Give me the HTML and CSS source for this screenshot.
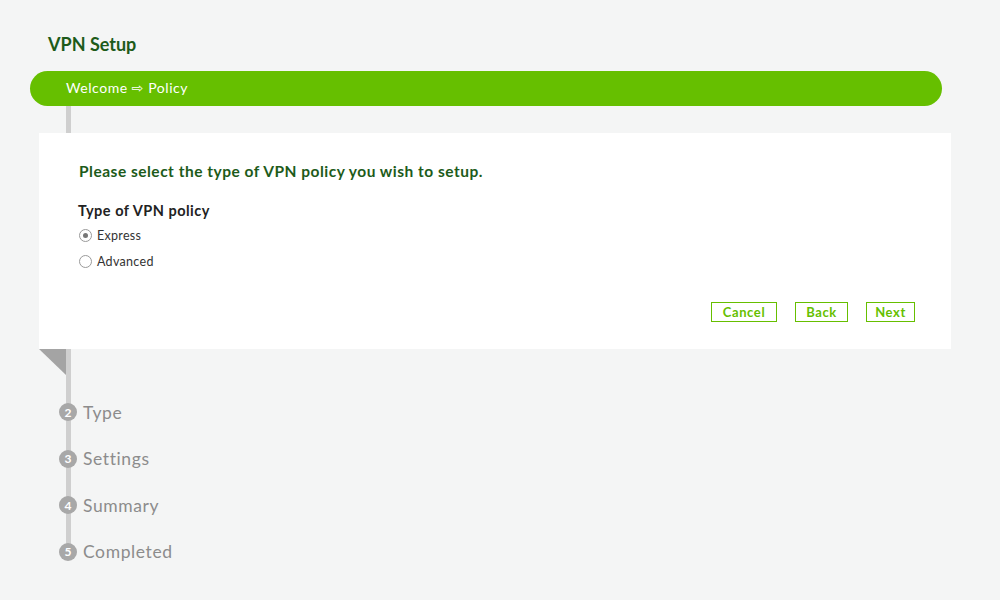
FILE: index.html
```html
<!DOCTYPE html>
<html>
<head>
<meta charset="utf-8">
<link rel="stylesheet" href="styles.css">
</head>
<body>
<div class="page">
  <h1 class="title">VPN Setup</h1>
  <div class="wizard">
    <div class="pill">Welcome &#8680; Policy</div>
    <div class="rail-top"></div>
    <div class="card">
      <p class="lead">Please select the type of VPN policy you wish to setup.</p>
      <div class="field-label">Type of VPN policy</div>
      <label class="radio-row"><span class="radio checked"></span>Express</label>
      <label class="radio-row"><span class="radio"></span>Advanced</label>
      <div class="actions">
        <button class="btn btn-cancel">Cancel</button>
        <button class="btn btn-back">Back</button>
        <button class="btn btn-next">Next</button>
      </div>
    </div>
    <div class="steps">
      <div class="fold"></div>
      <div class="step"><span class="num">2</span>Type</div>
      <div class="step"><span class="num">3</span>Settings</div>
      <div class="step"><span class="num">4</span>Summary</div>
      <div class="step"><span class="num">5</span>Completed</div>
    </div>
  </div>
</div>
</body>
</html>
```
FILE: styles.css
```css
html, body {
  margin: 0;
  padding: 0;
  background: #f4f5f5;
  font-family: "Lato", "Open Sans", "DejaVu Sans", sans-serif;
}
.page {
  width: 1000px;
  height: 600px;
  overflow: hidden;
}
.title {
  margin: 0;
  padding: 33px 0 0 48px;
  height: 38px;
  font-size: 18px;
  font-weight: 700;
  color: #1d5b1a;
  line-height: 22px;
}
.wizard {
  padding-left: 30px;
}
.pill {
  width: 876px;
  height: 35px;
  line-height: 34px;
  background: #66bf00;
  border-radius: 18px;
  color: #ffffff;
  font-size: 14px;
  letter-spacing: 0.55px;
  padding-left: 36px;
}
.rail-top {
  margin-left: 36px;
  width: 5px;
  height: 27px;
  background: #cfcfcf;
}
.card {
  margin-left: 9px;
  width: 872px;
  height: 216px;
  background: #ffffff;
  padding: 0 0 0 40px;
  display: flex;
  flex-direction: column;
}
.lead {
  margin: 29px 0 0 0;
  font-size: 15.5px;
  font-weight: 700;
  color: #1d5b1a;
  letter-spacing: 0.5px;
}
.field-label {
  margin-top: 22px;
  margin-left: -1px;
  font-size: 14.5px;
  font-weight: 700;
  color: #222;
  letter-spacing: 0.5px;
}
.radio-row {
  display: flex;
  align-items: center;
  font-size: 12.5px;
  color: #333;
  height: 14px;
  margin-top: 9px;
  letter-spacing: 0.3px;
}
.radio-row + .radio-row {
  margin-top: 12px;
}
.radio {
  width: 11px;
  height: 11px;
  border: 1px solid #9a9a9a;
  border-radius: 50%;
  margin-right: 5px;
  position: relative;
  background: #fff;
}
.radio.checked::after {
  content: "";
  position: absolute;
  left: 3px;
  top: 3px;
  width: 5px;
  height: 5px;
  border-radius: 50%;
  background: #777;
}
.actions {
  display: flex;
  justify-content: flex-end;
  gap: 18px;
  margin-top: 34px;
  padding-right: 36px;
}
.btn {
  font-family: inherit;
  background: #fff;
  border: 1.5px solid #66bf00;
  color: #66bf00;
  font-weight: 700;
  font-size: 13px;
  letter-spacing: 0.6px;
  height: 20px;
  padding: 0;
  line-height: 16px;
  text-align: center;
}
.btn-cancel { width: 66px; }
.btn-back { width: 53px; }
.btn-next { width: 49px; }
.steps {
  position: relative;
  margin-left: 36px;
  width: 5px;
  height: 210px;
  background: #cfcfcf;
  padding-top: 54px;
  box-sizing: border-box;
}
.fold {
  position: absolute;
  left: -27px;
  top: 0;
  width: 0;
  height: 0;
  border-top: 26px solid #a4a4a4;
  border-left: 27px solid transparent;
}
.step {
  display: flex;
  align-items: center;
  height: 18px;
  margin-left: -7px;
  margin-bottom: 28.5px;
  font-size: 17.5px;
  color: #8c8c8c;
  letter-spacing: 0.6px;
  white-space: nowrap;
}
.num {
  width: 18px;
  height: 18px;
  border-radius: 50%;
  background: #a8a8a8;
  color: #fff;
  font-size: 12px;
  font-weight: 700;
  letter-spacing: 0;
  display: flex;
  align-items: center;
  justify-content: center;
  margin-right: 6px;
  flex: none;
}
```
